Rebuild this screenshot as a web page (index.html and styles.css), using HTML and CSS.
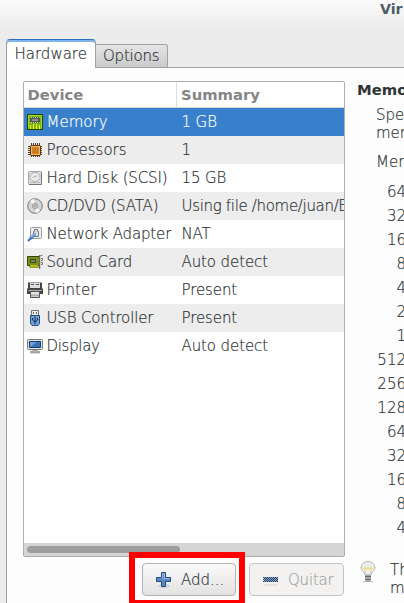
FILE: index.html
```
<!DOCTYPE html>
<html lang="en">
<head>
<meta charset="utf-8">
<title>Virtual Machine Settings</title>
<link rel="stylesheet" href="styles.css">
</head>
<body>
<div class="window">
  <header class="titlebar">Vir</header>
  <nav class="tabs">
    <div class="tab active">Hardware</div>
    <div class="tab options">Options</div>
    <div class="tab-line"></div>
  </nav>
  <main class="panel">
    <section class="left">
      <div class="tree">
        <div class="head"><span class="device">Device</span><span class="summary">Summary</span></div>
        <div class="row selected">
          <svg class="icon" viewBox="0 0 16 16"><rect x=".5" y=".5" width="15" height="15" fill="#75b518" stroke="#27460c"/><path d="M1.5 14.500V1.500H14.500V14.500" fill="none" stroke="#a3d82c"/><path d="M4 3h8v1h1v4h-1v1H4V8H3V4h1z" fill="#555b51"/><path d="M4 3.500h8M4 8.500h8" stroke="#c8ccbd" stroke-dasharray="1 1"/><path d="M5 6h6" stroke="#8d9288" stroke-width="2"/><path d="M3 11h1v4H3zm3-1h1v5H6zm3 0h1v5H9zm3 1h1v4h-1z" fill="#ffee20"/></svg>
          <span class="name">Memory</span><span class="value">1 GB</span>
        </div>
        <div class="row">
          <svg class="icon" viewBox="0 0 16 16"><path d="M4.500 1v14M6.500 1v14M8.500 1v14M10.500 1v14M12.500 1v14M1 4.500h14M1 6.500h14M1 8.500h14M1 10.500h14M1 12.500h14" stroke="#4b4036"/><rect x="3.500" y="3.500" width="10" height="10" rx="1" fill="#cf852b" stroke="#653706"/><rect x="4.500" y="4.500" width="8" height="8" fill="none" stroke="#efb866"/><path d="M6 6h5v5H6z" fill="#c97a20"/></svg>
          <span class="name">Processors</span><span class="value">1</span>
        </div>
        <div class="row">
          <svg class="icon" viewBox="0 0 16 16"><rect x="1.500" y="1.500" width="13" height="13" rx="1" fill="#dedede" stroke="#a5a5a5"/><path d="M14.500 2v12.500H2" fill="none" stroke="#777"/><ellipse cx="8" cy="7" rx="5" ry="4.500" fill="#ececec" stroke="#b2b2b2"/><path d="M6 8q0-2 4-2" fill="none" stroke="#aaa"/><path d="M3 12.500h10" stroke="#bbb"/></svg>
          <span class="name tight">Hard Disk (SCSI)</span><span class="value">15 GB</span>
        </div>
        <div class="row">
          <svg class="icon" viewBox="0 0 16 16"><circle cx="8" cy="8" r="7.300" fill="#d4d4d4" stroke="#777"/><path d="M8 8 3 3a7 7 0 0 1 4-2zM8 8l5 5a7 7 0 0 1-4 2z" fill="#f7f7f7"/><circle cx="8" cy="8" r="2.600" fill="#ddd" stroke="#999"/><circle cx="8" cy="8" r="1" fill="#fff" stroke="#666" stroke-width=".7"/></svg>
          <span class="name tight">CD/DVD (SATA)</span><span class="value long">Using file /home/juan/E</span>
        </div>
        <div class="row">
          <svg class="icon" viewBox="0 0 16 16"><rect x="3.500" y="1.500" width="11" height="11" rx="1" fill="#eee" stroke="#999"/><path d="M6.500 10.500v-5h1v-2h3v2h1v5z" fill="#ddd" stroke="#727b83"/><path d="m1 15 4-4" stroke="#3d6eac" stroke-width="2"/><path d="m3 13 5-5" stroke="#4b7fc4" stroke-width="3"/><path d="m4 11 5-4" stroke="#91b7e5" stroke-width="1.500"/></svg>
          <span class="name tight">Network Adapter</span><span class="value">NAT</span>
        </div>
        <div class="row">
          <svg class="icon" viewBox="0 0 16 16"><path d="M.5 2.500h12v9H11v2H3v-2H.5z" fill="#778f13" stroke="#36450b"/><path d="M3 5h6v4H3z" fill="#3c5016"/><path d="M4 6h4v2H4z" fill="#76836b"/><path d="M4 11v3M6 11v3M8 11v3M10 11v3" stroke="#f5ee25"/><path d="M12.500 1v14" stroke="#666"/><path d="M13.500 1v14" stroke="#ccc"/><path d="M13.500 1.500h2M14 4.500h1.500v2H14M14 8.500h1.500v2H14" fill="none" stroke="#777"/></svg>
          <span class="name tight">Sound Card</span><span class="value">Auto detect</span>
        </div>
        <div class="row">
          <svg class="icon" viewBox="0 0 16 16"><path d="M1 .5h14v6h1V12H0V6.500h1z" fill="#454545"/><path d="M3 1h10v5H3z" fill="#ddd"/><path d="M4 2.500h3M9 2.500h3" stroke="#555"/><path d="M1 8.500h14" stroke="#aaa"/><path d="M3.500 9.500h9v6h-9z" fill="#e5e5e5" stroke="#555"/><path d="M4 13.500h8" stroke="#aaa" stroke-width="2"/></svg>
          <span class="name">Printer</span><span class="value">Present</span>
        </div>
        <div class="row">
          <svg class="icon" viewBox="0 0 16 16"><path d="M4.500.5h7v5h-7z" fill="#eee" stroke="#777"/><path d="M6 2h1v2H6zm3 0h1v2H9z" fill="#666"/><path d="M3.500 5.500h9v8l-1.500 2H5l-1.500-2z" fill="#6fa0d8" stroke="#234e83"/><path d="M8 6.500V14M5.500 8v2L8 12l2.500-2V8" fill="none" stroke="#142e50"/></svg>
          <span class="name tight">USB Controller</span><span class="value">Present</span>
        </div>
        <div class="row">
          <svg class="icon" viewBox="0 0 16 16"><rect x=".5" y="1.500" width="15" height="10" rx="1" fill="#e2e2df" stroke="#777"/><path d="M2.500 3.500h11v6h-11z" fill="#3972b2" stroke="#143c72"/><path d="M3 9V4h7z" fill="#6f9fd2"/><path d="M6 12h4v1.500h2.500V15h-9v-1.500H6z" fill="#bbb" stroke="#777" stroke-width=".6"/></svg>
          <span class="name display">Display</span><span class="value">Auto detect</span>
        </div>
        <div class="scrollbar"><div class="thumb"></div></div>
      </div>
      <div class="buttons">
        <div class="button add"><svg class="icon" viewBox="0 0 16 16"><ellipse cx="8" cy="14" rx="6" ry="2" fill="#d3d3d3"/><path d="M5.500.5h4v5h5v4h-5v5h-4v-5h-5v-4h5z" fill="#5b88bf" stroke="#204a87"/><path d="M6.500 6.500v-5h2v5h5" fill="none" stroke="#9dbce1"/></svg><span>Add...</span></div>
        <div class="button disabled"><svg class="icon" viewBox="0 0 16 16"><path d="M1 12h13v2H1z" fill="#e3e3e3"/><path d="M1 5h14v5H1z" fill="#8a9dbb"/><path d="M0 5.500h15M0 7.500h15M0 9.500h15" stroke="#284572" stroke-dasharray="1 1"/><path d="M1 6.500h14M1 8.500h14" stroke="#284572" stroke-dasharray="1 1"/></svg><span>Quitar</span></div>
      </div>
    </section>
    <section class="details">
      <h1>Memo</h1>
      <p class="intro">Spe<br>mer</p>
      <p class="label">Mer</p>
      <div class="sizes"><div>64</div><div>32</div><div>16</div><div>8</div><div>4</div><div>2</div><div>1</div><div>512</div><div>256</div><div>128</div><div>64</div><div>32</div><div>16</div><div>8</div><div>4</div></div>
      <div class="hint">
        <svg class="bulb" viewBox="0 0 16 22"><path d="M5 14C5 11 1 10 1 6.500a7 6 0 0 1 14 0C15 10 11 11 11 14z" fill="#ededeb" stroke="#b4b4b0"/><path d="M6 13 4 7l2 1 2-1 2 1 2-1-2 6" fill="none" stroke="#d5d5ca"/><path d="m4 6 2 2 2-1 2 1 2-2" fill="none" stroke="#efe15a" stroke-width="1.500"/><path d="M5 14h6v5l-2 2H7l-2-2z" fill="#aaa"/><path d="M5 15.500h6M5 18.500h6" stroke="#666"/><path d="M3 20.500h10" stroke="#999" opacity=".6"/></svg>
        <span>Th<br>m</span>
      </div>
    </section>
  </main>
  <div class="highlight"></div>
</div>
</body>
</html>
```
FILE: styles.css
```
* { box-sizing: border-box; }
body { margin: 0; overflow: hidden; }
.window {
  position: relative; width: 404px; height: 603px; overflow: hidden;
  display: flex; flex-direction: column;
  background: linear-gradient(#fbfbfb, #ececec 30px);
  color: #2e3436;
  font: 200 15px/18px "DejaVu Sans Light", "DejaVu Sans", sans-serif;
  -webkit-text-stroke: .2px currentColor;
  white-space: nowrap;
}
.titlebar, .head, .details h1 { -webkit-text-stroke: 0; }
.titlebar { height: 39px; flex: none; padding-left: 380px; color: #4c5b64; font: bold 14.2px/18px "DejaVu Sans", sans-serif; }
.tabs { display: flex; height: 29px; flex: none; padding-left: 6px; align-items: flex-end; }
.tab.active { width: 90px; height: 29px; padding: 5px 0 0 7.5px; background: #fff; border: 1px solid #a1a1a1; border-top: 1px solid #2a70be; border-bottom: 0; border-radius: 4px 4px 0 0; box-shadow: inset 0 2px #7eb3ec; }
.tab.options { width: 72px; height: 24px; padding: 2px 0 0 7px; letter-spacing: -.2px; background: linear-gradient(#e5e5e5, #cacaca); border: 1px solid #a1a1a1; border-left: 0; border-radius: 0 3px 0 0; }
.tab-line { flex: 1; height: 1px; background: #a1a1a1; }
.panel { flex: 1; display: flex; margin-left: 6px; padding: 13px 0 0 16px; border-left: 1px solid #a1a1a1; background: #fdfdfd; }
.left { width: 322px; flex: none; }
.tree { height: 476px; display: flex; flex-direction: column; border: 1px solid #acacac; border-radius: 2px; background: #fff; overflow: hidden; }
.head { display: flex; height: 26px; flex: none; border-bottom: 1px solid #d3d3d3; color: #858585; font: bold 14.8px/26px "DejaVu Sans", sans-serif; }
.device { width: 153px; padding-left: 3.5px; border-right: 1px solid #ddd; }
.summary { padding-left: 4px; }
.row { display: flex; align-items: center; height: 28px; flex: none; padding-left: 3px; }
.row:nth-child(odd) { background: #ededed; }
.row.selected { background: #3880cc; color: #fff; }
.icon { width: 16px; height: 16px; flex: none; }
.name { width: 138.5px; padding-left: 3.5px; flex: none; }
.tight { letter-spacing: -.15px; }
.display { letter-spacing: -.3px; }
.value { letter-spacing: -.1px; }
.value.long { letter-spacing: -.32px; }
.scrollbar { margin-top: auto; height: 13px; padding: 3px; background: #d5d5d5; }
.thumb { width: 153px; height: 7px; border-radius: 4px; background: #9b9d9f; }
.buttons { display: flex; justify-content: flex-end; gap: 13px; padding: 6px 1px 0 0; }
.button { display: flex; align-items: center; gap: 9px; width: 95px; height: 33px; padding-left: 14px; border: 1px solid #b2b2b2; border-radius: 4px; background: linear-gradient(#fafafa, #e2e2e2); }
.button.add { width: 94px; padding-left: 13px; }
.button.disabled { padding-left: 13px; border-color: #c3c3c3; background: #f3f2f1; color: #a3a6a5; letter-spacing: -.2px; }
.details { margin-left: 12px; width: 50px; }
.details h1 { margin: 0; height: 25px; font: bold 14.8px/18px "DejaVu Sans", sans-serif; }
.details p { margin: 0; padding-left: 19px; }
.intro { height: 47px; }
.label { height: 27px; }
.sizes { width: 49px; text-align: right; line-height: 24px; }
.hint { display: flex; gap: 14px; padding-top: 21px; }
.bulb { width: 16px; height: 22px; flex: none; margin-left: 3px; }
.highlight { position: absolute; left: 129px; top: 552px; width: 116px; height: 54px; border: 6px solid #f00; }
```
